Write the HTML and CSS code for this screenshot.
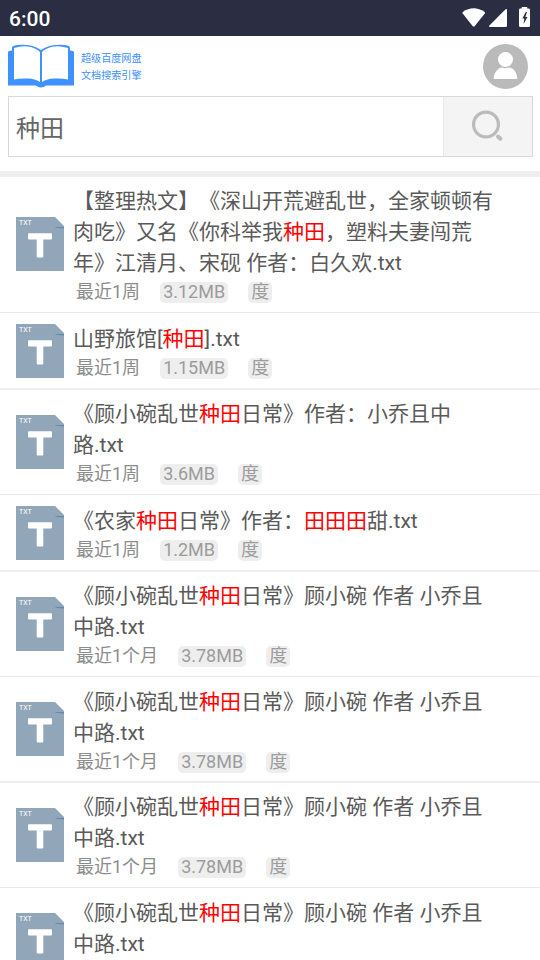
FILE: index.html
```html
<!DOCTYPE html>
<html lang="zh-CN">
<head>
<meta charset="utf-8">
<title>种田</title>
<link rel="stylesheet" href="styles.css">
</head>
<body>
<svg class="defs" aria-hidden="true">
  <symbol id="txt" viewBox="0 0 48 54">
    <path fill="#92a6ba" d="M0 0H39L48 9V54H0Z"/>
    <path fill="#6488b4" d="M39.5 10H48V11.500L39.500 10.800Z"/>
    <path fill="#fff" d="M13 16.200H35Q36 16.200 36 17.200V21.500Q36 22.500 35 22.500H27.300V39.500Q27.300 40.500 26.300 40.500H21.700Q20.700 40.500 20.700 39.500V22.500H13Q12 22.500 12 21.500V17.200Q12 16.200 13 16.200Z"/>
  </symbol>
</svg>
<div class="status">
  <span class="time">6:00</span>
  <svg class="signals" width="70" height="24" viewBox="0 0 70 24" fill="#fff">
    <path d="M0.800 6Q11.500-1.400 22.700 6Q23.300 6.500 22.800 7.500L12.800 20Q11.700 21 10.600 20L0.700 7.500Q0.200 6.500 0.800 6Z"/>
    <path d="M45 4V19.500Q45 21 43.500 21H28Q26.300 20.800 27.400 19.600L43.300 3.600Q45 2.400 45 4Z"/>
    <path d="M59.700 1.500Q59.700 1 60.200 1H64.800Q65.300 1 65.300 1.500V2.500H66.700Q68 2.500 68 3.800V19.700Q68 21 66.700 21H58.300Q57 21 57 19.700V3.800Q57 2.500 58.300 2.500H59.700Z"/>
    <path fill="#2b2d42" d="M63.800 6L60.300 12.500H62.300L61.500 18L65.500 11H63.400L65 6Z"/>
  </svg>
</div>
<header>
  <svg width="66" height="44" viewBox="0 0 66 44">
    <path fill="#3e91ff" d="M0 8L1 7L4 6.500V3.500Q5 1 13 0.800Q25 0.500 33 6Q41 0.500 53 0.800Q61 1 62 3.500V6.500L65 7L66 8V41.500H38Q36 43.500 33 43.500Q30 43.500 28 41.500H0Z"/>
    <path fill="#fff" d="M6 4Q20-0.500 30.500 6.500L32 8V38Q27 34.500 20 34.500Q12 34 6 35.500ZM34 8L35.500 6.500Q46-0.500 60 4V35.500Q54 34 46 34.500Q39 34.500 34 38Z"/>
  </svg>
  <div class="slogan"><div>超级百度网盘</div><div>文档搜索引擎</div></div>
  <svg class="avatar" width="45" height="45" viewBox="0 0 45 45">
    <circle cx="22.500" cy="22.500" r="22.500" fill="#bababa"/>
    <circle cx="22.500" cy="15.500" r="7.500" fill="#fff"/>
    <path fill="#fff" d="M10.800 35V33C12 27 15.500 23.700 19 23.400Q22.500 25 26 23.400C30 23.700 33 27 34.200 33V35Z"/>
  </svg>
</header>
<div class="search">
  <div class="query">种田</div>
  <div class="go">
    <svg width="32" height="32" viewBox="0 0 32 32" fill="none" stroke="#bbb">
      <circle cx="14" cy="14.500" r="12.400" stroke-width="3.200"/>
      <path d="M26 26.500L28.400 28.700" stroke-width="4" stroke-linecap="round"/>
    </svg>
  </div>
</div>
<main>
  <article class="row three">
    <svg class="file"><use href="#txt"/><text class="ext" x="3" y="8">TXT</text></svg>
    <div class="info">
      <div class="title">【整理热文】《深山开荒避乱世，全家顿顿有<br>肉吃》又名《你科举我<em>种田</em>，塑料夫妻闯荒<br>年》江清月、宋砚 作者：白久欢.txt</div>
      <div class="meta"><span>最近1周</span><b>3.12MB</b><b>度</b></div>
    </div>
  </article>
  <article class="row one">
    <svg class="file"><use href="#txt"/><text class="ext" x="3" y="8">TXT</text></svg>
    <div class="info">
      <div class="title">山野旅馆[<em>种田</em>].txt</div>
      <div class="meta"><span>最近1周</span><b>1.15MB</b><b>度</b></div>
    </div>
  </article>
  <article class="row two">
    <svg class="file"><use href="#txt"/><text class="ext" x="3" y="8">TXT</text></svg>
    <div class="info">
      <div class="title">《顾小碗乱世<em>种田</em>日常》作者：小乔且中<br>路.txt</div>
      <div class="meta"><span>最近1周</span><b>3.6MB</b><b>度</b></div>
    </div>
  </article>
  <article class="row one">
    <svg class="file"><use href="#txt"/><text class="ext" x="3" y="8">TXT</text></svg>
    <div class="info">
      <div class="title">《农家<em>种田</em>日常》作者：<em>田田田</em>甜.txt</div>
      <div class="meta"><span>最近1周</span><b>1.2MB</b><b>度</b></div>
    </div>
  </article>
  <article class="row two">
    <svg class="file"><use href="#txt"/><text class="ext" x="3" y="8">TXT</text></svg>
    <div class="info">
      <div class="title">《顾小碗乱世<em>种田</em>日常》顾小碗 作者 小乔且<br>中路.txt</div>
      <div class="meta"><span>最近1个月</span><b>3.78MB</b><b>度</b></div>
    </div>
  </article>
  <article class="row two thick">
    <svg class="file"><use href="#txt"/><text class="ext" x="3" y="8">TXT</text></svg>
    <div class="info">
      <div class="title">《顾小碗乱世<em>种田</em>日常》顾小碗 作者 小乔且<br>中路.txt</div>
      <div class="meta"><span>最近1个月</span><b>3.78MB</b><b>度</b></div>
    </div>
  </article>
  <article class="row two">
    <svg class="file"><use href="#txt"/><text class="ext" x="3" y="8">TXT</text></svg>
    <div class="info">
      <div class="title">《顾小碗乱世<em>种田</em>日常》顾小碗 作者 小乔且<br>中路.txt</div>
      <div class="meta"><span>最近1个月</span><b>3.78MB</b><b>度</b></div>
    </div>
  </article>
  <article class="row two last">
    <svg class="file"><use href="#txt"/><text class="ext" x="3" y="8">TXT</text></svg>
    <div class="info">
      <div class="title">《顾小碗乱世<em>种田</em>日常》顾小碗 作者 小乔且<br>中路.txt</div>
    </div>
  </article>
</main>
</body>
</html>
```
FILE: styles.css
```css
* { box-sizing: border-box; }
html, body { height: 960px; overflow: hidden; }
body {
  margin: 0;
  background: #fff;
  color: #5a5a5a;
  font-family: Roboto, "Noto Sans CJK SC", sans-serif;
  text-spacing-trim: space-all;
}
svg { display: block; flex: none; }
.defs { position: absolute; width: 0; height: 0; }
.status {
  height: 36px;
  padding: 0 9px;
  display: flex;
  align-items: center;
  justify-content: space-between;
  background: #2b2d42;
  color: #fff;
}
.time { font-size: 21px; font-weight: 500; line-height: 34px; padding-top: 2px; }
.signals { margin: 0 -1px 0 0; }
header {
  height: 60px;
  padding: 8px 12px 0 8px;
  display: flex;
  align-items: flex-start;
}
.slogan {
  margin: 6px 0 0 7px;
  color: #3e91ff;
  font-size: 10.100px;
  font-weight: 400;
  line-height: 17px;
}
.avatar { margin-left: auto; }
.search {
  height: 61px;
  margin: 0 7px 14px 8px;
  display: flex;
  border: 1px solid #d9d9d9;
}
.query { flex: 1; padding-left: 7px; font-size: 24px; line-height: 64px; height: 59px; color: #666; }
.go {
  width: 89px;
  padding: 13px 0 0 28px;
  background: #f4f4f4;
  border-left: 1px solid #eaeaea;
}
main { border-top: 6px solid #eee; }
.row {
  display: flex;
  padding-left: 16px;
  border-bottom: 1px solid #e9e9e9;
}
.three { height: 136px; }
.three .file { margin-bottom: 1px; }
.one { height: 77px; border-bottom: 2px solid #eee; }
.two { height: 105px; }
.thick { height: 106px; border-bottom: 2px solid #eee; }
.file { width: 48px; height: 54px; align-self: center; }
.ext { font: 400 7px Roboto, sans-serif; fill: #fff; }
.info { padding: 9px 0 0 9px; }
.one .info { padding-top: 11px; }
.thick .info, .last .info { padding-top: 10px; }
.title { font-size: 21px; line-height: 31px; white-space: nowrap; }
.title em { color: #f00; font-style: normal; }
.meta {
  display: flex;
  gap: 20px;
  margin: 3px 0 0 3px;
  color: #8c8c8c;
  font-size: 18px;
  line-height: 19px;
}
.meta b {
  padding: 0 3px 2px;
  border-radius: 5px;
  background: #eee;
  color: #9c9c9c;
  font-weight: 400;
}
```
